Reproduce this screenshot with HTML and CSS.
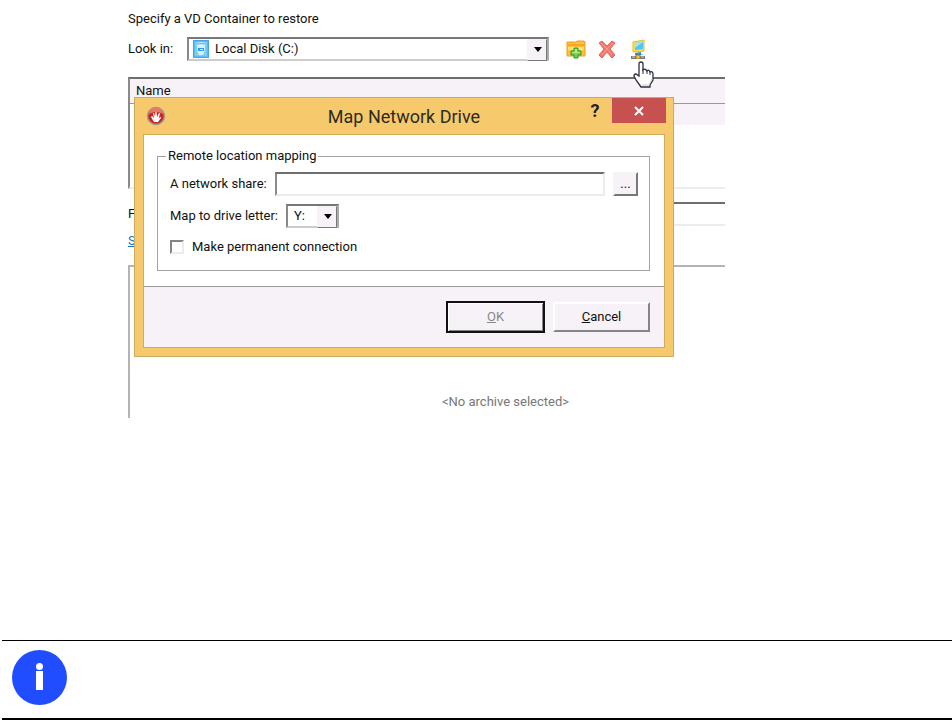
FILE: index.html
```
<!DOCTYPE html>
<html lang="en">
<head>
    <meta charset="UTF-8">
    <meta name="viewport" content="width=device-width, initial-scale=1.0">
    <title>Map Network Drive</title>
    <link rel="stylesheet" href="styles.css">
</head>
<body>
    <main class="wizard">
        <p class="intro">Specify a VD Container to restore</p>
        <div class="look-in">
            <label for="lookIn">Look in:</label>
            <div class="select disk-select">
                <svg class="disk-icon" width="16" height="18" viewBox="0 0 16 18">
                    <rect x="0.5" y="0.5" width="15" height="17" fill="#5bbcf5" stroke="#48a5ea"/>
                    <path d="M2 2h12v14H2z" fill="#7ccbf9"/>
                    <path d="M4 3q4-2 8 0v5q0 4-2 7H6q-2-3-2-7z" fill="#d3f1fe"/>
                    <path d="M4 4q4-1 8 0" fill="none" stroke="#4cb0f0"/>
                    <path d="M5 8h6v3H5z" fill="#359be8"/>
                    <path d="M7 9h3v1H7z" fill="#d3f1fe"/>
                </svg>
                <select id="lookIn">
                    <option>Local Disk (C:)</option>
                </select>
            </div>
            <div class="tools">
                <button type="button" class="tool" aria-label="New folder">
                    <svg width="20" height="20" viewBox="0 0 20 20">
                        <path d="M1 3h9l1-1h7l1 1v14H1z" fill="#ffc13b" stroke="#f39a1c"/>
                        <path d="M2 6h16" stroke="#f28c14"/>
                        <path d="M2 8h16v3H2z" fill="#ffe27a"/>
                        <path d="M8 9h4v3h3v4h-3v3H8v-3H5v-4h3z" fill="#6fd54c" stroke="#2f9a2b"/>
                        <path d="M9 10h2v3h3v1H6v-1h3z" fill="#b5f08f"/>
                    </svg>
                </button>
                <button type="button" class="tool" aria-label="Delete">
                    <svg width="20" height="20" viewBox="0 0 20 20">
                        <path d="M2 4l3-2 5 5 5-5 3 2-5 6 5 6-3 3-5-6-5 6-3-3 5-6z" fill="#f4796c" stroke="#e0675c"/>
                        <path d="M4 4l6 6 6-6M5 16l5-6 5 6" fill="none" stroke="#fb9c8e"/>
                    </svg>
                </button>
                <button type="button" class="tool" aria-label="Map network drive">
                    <svg width="20" height="20" viewBox="0 0 20 20">
                        <path d="M5 3l11-2v11L5 13z" fill="#ffdf45" stroke="#e8b92c"/>
                        <path d="M7 4l8-1v7l-8 1z" fill="#4cc6f6"/>
                        <path d="M7 4l8-1-8 6z" fill="#9de5fb"/>
                        <path d="M7 14l6-1v2l2 1H7z" fill="#2a8ed6"/>
                        <path d="M3 17h14v3H3z" fill="#777"/>
                        <path d="M4 18h3M13 18h3" stroke="#ccc"/>
                        <path d="M8 16h4v4H8z" fill="#f2c53b" stroke="#9a7a2a"/>
                    </svg>
                </button>
            </div>
            <svg class="pointer" width="22" height="27" viewBox="0 0 22 27">
                <path d="M6 15V3q0-2 2-2t2 2v6q2-2 4 1 2-2 3 1 3-1 3 2v6l-3 5v2H8l-5-7-2-4q0-2 2-2z" fill="#fff" stroke="#2b3040" stroke-width="1.3"/>
                <path d="M10 8v5M14 9v4M17 10v4" stroke="#2b3040"/>
                <path d="M9 24h7l3-6" fill="none" stroke="#ccc"/>
            </svg>
        </div>

        <div class="file-list">
            <table>
                <thead>
                    <tr><th>Name</th></tr>
                </thead>
                <tbody>
                    <tr><td></td></tr>
                </tbody>
            </table>
        </div>

        <div class="file-row">
            <label for="fileName">F</label>
            <input type="text" id="fileName">
        </div>
        <a class="switch-link" href="#">S</a>
        <div class="archive-box">&lt;No archive selected&gt;</div>

        <section class="dialog" role="dialog" aria-labelledby="dialogTitle">
            <header class="title-bar">
                <svg class="app-icon" width="20" height="20" viewBox="0 0 20 20">
                    <circle cx="10" cy="10" r="8.5" fill="#c8281f" stroke="#a39a90" stroke-width="1.5"/>
                    <path d="M3 8a7 7 0 0 1 14 0q-7-4-14 0z" fill="#e4786a"/>
                    <path d="M8 16l-3-5 1-1 2 2-1-5h1l1 4 .5-5h1l.5 5 2-4h1l-1 5 2-1v1l-3 4z" fill="#fff"/>
                </svg>
                <h1 id="dialogTitle">Map Network Drive</h1>
                <button type="button" class="help">?</button>
                <button type="button" class="close" aria-label="Close">
                    <svg width="10" height="10" viewBox="0 0 10 10">
                        <path d="M1 1l8 8M9 1l-8 8" stroke="#fff" stroke-width="2"/>
                    </svg>
                </button>
            </header>
            <form class="dialog-form">
                <div class="dialog-body">
                    <fieldset>
                        <legend>Remote location mapping</legend>
                        <div class="form-row">
                            <label for="share">A network share:</label>
                            <input type="text" id="share">
                            <button type="button" class="button browse">...</button>
                        </div>
                        <div class="form-row">
                            <label for="drive">Map to drive letter:</label>
                            <div class="select drive-select">
                                <select id="drive">
                                    <option>Y:</option>
                                </select>
                            </div>
                        </div>
                        <div class="form-row">
                            <input type="checkbox" id="permanent">
                            <label for="permanent">Make permanent connection</label>
                        </div>
                    </fieldset>
                </div>
                <div class="actions">
                    <button type="submit" class="button ok" disabled><u>O</u>K</button>
                    <button type="button" class="button"><u>C</u>ancel</button>
                </div>
            </form>
        </section>
    </main>

    <aside class="note">
        <svg width="55" height="55" viewBox="0 0 55 55">
            <circle cx="27.5" cy="27.5" r="27.5" fill="#204dff"/>
            <circle cx="27.5" cy="16.5" r="3.5" fill="#fff"/>
            <path d="M24 21h7v19h-7z" fill="#fff"/>
        </svg>
    </aside>
</body>
</html>
```

FILE: styles.css
```
* {
    box-sizing: border-box;
}
body {
    margin: 0;
    min-height: 100vh;
    display: flex;
    flex-direction: column;
    justify-content: space-between;
    background-color: white;
    color: #111;
    font-family: Roboto, Arial, sans-serif;
    font-size: 13px;
    line-height: 16px;
}
button, input, select {
    font: inherit;
    color: inherit;
    border-radius: 0;
}
svg {
    display: block;
    flex: none;
}
.wizard {
    position: relative;
    margin: 0 227px 0 128px;
    padding-top: 11px;
}
.intro {
    margin: 0 0 10px;
}
.look-in {
    position: relative;
    display: flex;
    align-items: center;
    height: 24px;
    margin-bottom: 16px;
}
.look-in label {
    width: 59px;
}

/* sunken fields */
input[type="text"], .select {
    height: 24px;
    border: 2px solid;
    border-color: #6e6e6e #ececec #ececec #8a8a8a;
    background-color: white;
    padding: 0;
    outline: none;
}
.select {
    display: flex;
    align-items: center;
    position: relative;
    border-color: #777 #aaa #ccc #888;
}
.select select {
    appearance: none;
    flex: 1;
    height: 20px;
    padding: 0 20px 0 6px;
    border: 0;
    background: none;
    outline: none;
}
.select::after {
    content: "";
    position: absolute;
    right: 0;
    top: 0;
    width: 18px;
    height: 20px;
    border: 1px solid;
    border-color: #f6f2f7 #777 #777 #f6f2f7;
    background: #f6f2f7;
    pointer-events: none;
}
.select::before {
    content: "";
    position: absolute;
    z-index: 1;
    right: 5px;
    top: 8px;
    border: 4px solid transparent;
    border-top: 5px solid black;
    border-bottom: 0;
    pointer-events: none;
}
.disk-select {
    flex: 1;
    padding-left: 4px;
}

.tools {
    display: flex;
    gap: 11px;
    width: 176px;
    padding-left: 17px;
}
.tool {
    width: 20px;
    height: 20px;
    padding: 0;
    border: 0;
    background: none;
}
.pointer {
    position: absolute;
    right: 70px;
    top: 24px;
    z-index: 1;
}

.file-list {
    height: 112px;
    border: solid;
    border-width: 2px 0 2px 2px;
    border-color: #6e6e6e #ececec #ececec #8a8a8a;
    margin-bottom: 13px;
}
.file-list table {
    width: 100%;
    border-collapse: collapse;
}
.file-list th {
    height: 24px;
    padding: 0 6px;
    border-bottom: 1px solid #999;
    background-color: #f6f2f7;
    font-weight: normal;
    text-align: left;
}
.file-list td {
    height: 22px;
    padding: 0;
    background: linear-gradient(to right, white 50%, #f6f2f7 50%);
}
.file-row {
    display: flex;
    align-items: center;
}
.file-row label {
    width: 60px;
}
.file-row input {
    flex: 1;
    border-right: 0;
}
.switch-link {
    display: block;
    width: 8px;
    margin: 7px 0 16px;
    color: #0b72d9;
}
.archive-box {
    height: 153px;
    padding: 127px 0 0 156px;
    border: solid #b4b4b4;
    border-width: 2px 0 0 2px;
    color: #777;
    text-align: center;
}

.dialog {
    position: absolute;
    left: 6px;
    right: 51px;
    top: 97px;
    padding: 0 8px 8px;
    border: 1px solid #ccaa62;
    background-color: #f6ca6c;
}
.title-bar {
    display: flex;
    height: 36px;
    margin-right: -1px;
}
.app-icon {
    margin: 8px 0 0 3px;
}
.title-bar h1 {
    flex: 1;
    margin: 8px 0 0;
    padding-left: 64px;
    color: #2d2a20;
    font-size: 18px;
    font-weight: 400;
    line-height: 22px;
    text-align: center;
}
.help {
    width: 34px;
    height: 26px;
    padding: 0;
    border: 0;
    background: none;
    color: #222;
    font-size: 18px;
    font-weight: 700;
}
.close {
    display: flex;
    align-items: center;
    justify-content: center;
    width: 54px;
    height: 25px;
    padding: 0;
    border: 0;
    background-color: #c75050;
}
.dialog-form {
    border: 1px solid #d0ab60;
    background-color: #f6f2f7;
}
.dialog-body {
    padding: 13px 14px 15px 13px;
    border-bottom: 1px solid #999;
    background-color: white;
}
fieldset {
    display: flex;
    flex-direction: column;
    gap: 8px;
    margin: 0;
    padding: 8px 11px 12px 12px;
    border: 1px solid #a3a3a3;
}
legend {
    margin-left: -4px;
    padding: 0 2px;
}
.form-row {
    display: flex;
    align-items: center;
    gap: 8px;
    min-height: 24px;
}
.form-row:last-child {
    min-height: 22px;
}
.form-row input[type="text"] {
    flex: 1;
    min-width: 0;
}
.drive-select {
    width: 53px;
}
.drive-select select {
    width: 48px;
}
input[type="checkbox"] {
    appearance: none;
    width: 14px;
    height: 14px;
    margin: 0;
    border: 2px solid;
    border-color: #858585 #ececec #ececec #858585;
    background-color: white;
}
.button {
    width: 97px;
    height: 30px;
    padding: 0;
    border: 2px solid;
    border-color: white #858585 #858585 white;
    background-color: #f6f2f7;
}
.browse {
    width: 25px;
    height: 24px;
    border-color: #f6f2f7 #777 #777 #f6f2f7;
}
.actions {
    display: flex;
    align-items: center;
    justify-content: flex-end;
    gap: 8px;
    height: 60px;
    padding-right: 14px;
}
.ok {
    width: 99px;
    height: 32px;
    border-color: #111;
    box-shadow: inset 1px 1px white, inset -1px -1px #858585;
    color: #888;
}

.note {
    height: 80px;
    margin-left: 2px;
    padding: 9px 10px;
    border-top: 1px solid black;
    border-bottom: 2px solid black;
}
```
